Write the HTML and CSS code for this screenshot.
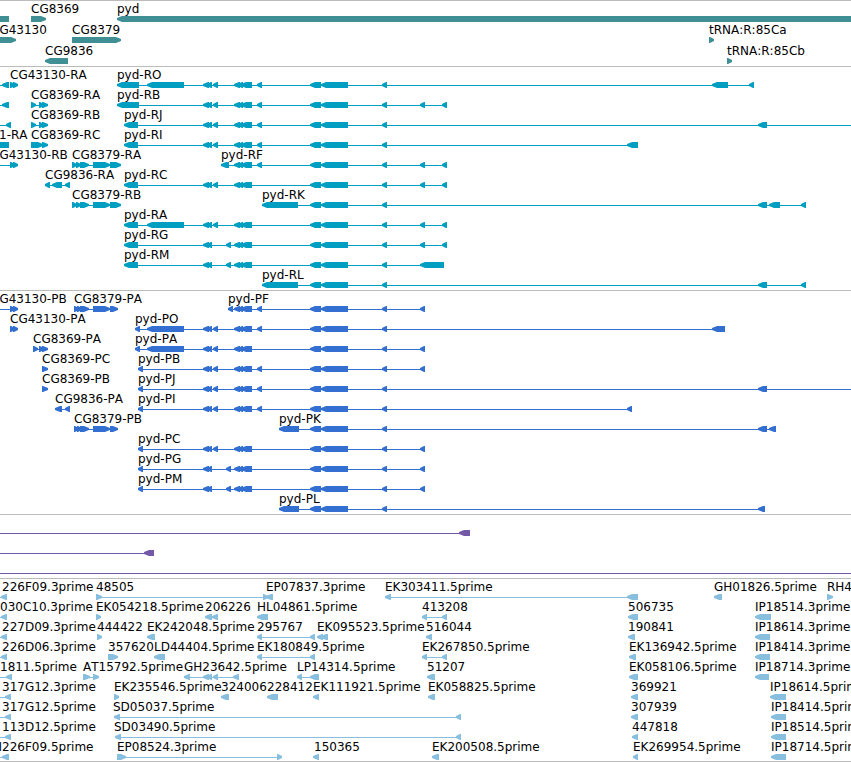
FILE: index.html
```
<!DOCTYPE html>
<html lang="en">
<head>
    <meta charset="UTF-8">
    <meta name="viewport" content="width=device-width, initial-scale=1.0">
    <title>Genome Browser - pyd region</title>
    <link rel="stylesheet" href="styles.css">
</head>
<body>
    <main class="browser">
        <section class="track gene" id="gene" aria-label="Genes"></section>
        <section class="track rna" id="rna" aria-label="Transcripts"></section>
        <section class="track protein" id="protein" aria-label="Proteins"></section>
        <section class="track aberration" id="aberration" aria-label="Aberrations"></section>
        <section class="track est" id="est" aria-label="ESTs"></section>
    </main>
    <script src="script.js"></script>
</body>
</html>
```
FILE: styles.css
```
body {
    margin: 0;
    background-color: #fff;
    font-family: "DejaVu Sans", Verdana, sans-serif;
    font-size: 12px;
    font-kerning: none;
    color: #000;
}
.browser {
    overflow: hidden;
}
.track {
    border-top: 1px solid #bbb;
    padding: 1px 0 2px;
}
.track:last-child {
    border-bottom: 1px solid #bbb;
    padding-bottom: 1px;
}
.lane {
    display: block;
    width: 100%;
    height: 20px;
    overflow: visible;
}
.lane text {
    fill: #000;
}
/* Gene lanes are a bit taller than the others */
.gene {
    fill: #408f95;
    padding-bottom: 1px;
}
.gene .lane {
    height: 21px;
}
.rna {
    fill: #009fc1;
}
.protein {
    fill: #326fd0;
}
.aberration {
    fill: #7459a9;
}
.est {
    fill: #88bede;
}
```
FILE: script.js
```
// Exon groups shared by the pyd transcripts
const A2 = '203:209 207:212';
const A = A2 + ' 213:218';
const B = '234:240 238:243 241:252';
const C = '257:262';
const D = '310:321 321:348';
const E = '382:387';
const F = '420:425';
const G = '442:447';
const OFF_LEFT = '-20:-15';
const OFF_RIGHT = '4000:4005';

// Each lane is a list of features: [label, x, strand, exons]
const tracks = {
    gene: [
        [['', 0, '-', '-20:9'], ['CG8369', 31, '+', '31:46'], ['pyd', 117, '-', '117:4000']],
        [['CG43130', -9, '+', '-9:16'], ['CG8379', 72, '+', '72:121'], ['tRNA:R:85Ca', 709, '+', '709:714']],
        [['CG9836', 45, '-', '45:68'], ['tRNA:R:85Cb', 727, '+', '727:732']]
    ],
    rna: [
        [['', 0, '-', `${OFF_LEFT} 2:9`], ['CG43130-RA', 10, '+', '10:15 13:18'],
         ['pyd-RO', 117, '-', `117:139 147:184 ${A} ${B} ${C} ${D} ${E} 712:728 749:754`]],
        [['', 0, '-', `${OFF_LEFT} 2:9`], ['CG8369-RA', 31, '+', '31:36 39:44 42:48'],
         ['pyd-RB', 117, '-', `117:139 ${A} ${B} ${C} ${D} ${E} ${F} ${G}`]],
        [['', 0, '-', `${OFF_LEFT} 6:11`], ['CG8369-RB', 31, '+', '31:36 39:44 42:48'],
         ['pyd-RJ', 124, '-', `124:138 ${A} ${B} ${C} ${D} ${E} 758:767 ${OFF_RIGHT}`]],
        [['1-RA', -1, '-', '-20:9'], ['CG8369-RC', 31, '+', '31:43 42:48'],
         ['pyd-RI', 124, '-', `124:138 ${A} ${B} ${C} ${D} ${E} 627:638`]],
        [['CG43130-RB', -9, '+', `${OFF_LEFT} 10:15 13:18`], ['CG8379-RA', 72, '+', '72:77 76:81 80:89 93:110 110:121'],
         ['pyd-RF', 221, '-', `221:229 ${B} ${C} ${D} ${E} ${F} ${G}`]],
        [['CG9836-RA', 45, '-', '45:50 52:62 65:70'],
         ['pyd-RC', 124, '-', `124:138 ${A} ${B} ${D} ${E} ${F} ${G}`]],
        [['CG8379-RB', 72, '+', '72:77 76:81 80:89 93:110 110:121'],
         ['pyd-RK', 262, '-', `262:298 ${D} ${E} 758:767 769:780 801:806`]],
        [['pyd-RA', 124, '-', `124:138 147:184 ${A} ${B} ${D} ${E} ${F} ${G}`]],
        [['pyd-RG', 124, '-', `124:138 ${A2} 226:231 ${B} ${D} ${E} ${F} ${G}`]],
        [['pyd-RM', 124, '-', `124:138 ${A2} 226:231 ${B} ${D} ${E} 420:444`]],
        [['pyd-RL', 262, '-', `262:298 ${D} ${E} 758:767 801:806`]]
    ],
    protein: [
        [['CG43130-PB', -9, '+', `${OFF_LEFT} 10:15 13:18`], ['CG8379-PA', 74, '+', '74:79 77:82 80:89 93:110 110:118'],
         ['pyd-PF', 228, '-', `228:233 ${B} ${C} ${D} ${E} ${F}`]],
        [['CG43130-PA', 10, '+', '10:15 13:18'],
         ['pyd-PO', 135, '-', `135:140 147:184 ${A} ${B} ${C} ${D} ${E} 712:725`]],
        [['CG8369-PA', 33, '+', '33:38 39:44 42:48'],
         ['pyd-PA', 135, '-', `135:140 147:184 ${A} ${B} ${D} ${E} ${F}`]],
        [['CG8369-PC', 42, '+', '42:48'], ['pyd-PB', 138, '-', `138:143 ${A} ${B} ${C} ${D} ${E} ${F}`]],
        [['CG8369-PB', 42, '+', '42:48'], ['pyd-PJ', 138, '-', `138:143 ${A} ${B} ${C} ${D} ${E} 758:767 ${OFF_RIGHT}`]],
        [['CG9836-PA', 55, '-', '55:62 65:70'], ['pyd-PI', 138, '-', `138:143 ${A} ${B} ${C} ${D} ${E} 627:632`]],
        [['CG8379-PB', 74, '+', '74:79 77:82 80:89 93:110 110:118'],
         ['pyd-PK', 279, '-', `279:299 ${D} ${E} 758:767 769:776`]],
        [['pyd-PC', 138, '-', `138:143 ${A} ${B} ${D} ${E} ${F}`]],
        [['pyd-PG', 138, '-', `138:143 ${A2} 226:231 ${B} ${D} ${E} ${F}`]],
        [['pyd-PM', 138, '-', `138:143 ${A2} 226:231 ${B} ${D} ${E} ${F}`]],
        [['pyd-PL', 279, '-', `279:299 ${D} ${E} 758:765`]]
    ],
    aberration: [
        [['', 0, '-', `${OFF_LEFT} 459:470`]],
        [['', 0, '-', `${OFF_LEFT} 144:154`]],
        [['', 0, '-', `${OFF_LEFT} ${OFF_RIGHT}`]]
    ],
    est: [
        [['226F09.3prime', 2, '-', `${OFF_LEFT} 1:7`], ['48505', 96, '+', '96:102 263:268'],
         ['EP07837.3prime', 266, '-', '266:273'], ['EK303411.5prime', 385, '-', '385:391 627:638'],
         ['GH01826.5prime', 714, '-', '714:722'], ['RH41633.5prime', 827, '+', '827:833']],
        [['030C10.3prime', 0, '-', `${OFF_LEFT} 1:7`], ['EK054218.5prime', 96, '+', '96:101'],
         ['206226', 205, '-', '205:212 212:218'], ['HL04861.5prime', 257, '-', '257:268'],
         ['413208', 422, '-', '422:427 442:447'], ['506735', 628, '-', '628:638'], ['IP18514.3prime', 755, '-', '755:771']],
        [['227D09.3prime', 2, '-', `${OFF_LEFT} 1:7`], ['444422', 97, '+', '97:102'],
         ['EK242048.5prime', 147, '-', '147:155'], ['295767', 257, '-', '257:262 310:315'],
         ['EK095523.5prime', 317, '-', '317:323 321:328'], ['516044', 426, '-', '426:432'],
         ['190841', 628, '-', '628:635'], ['IP18614.3prime', 755, '-', '755:770']],
        [['226D06.3prime', 2, '-', `${OFF_LEFT} 1:7`], ['357620', 108, '+', '108:118'],
         ['LD44404.5prime', 154, '-', '154:165'], ['EK180849.5prime', 257, '-', '257:262 310:315'],
         ['EK267850.5prime', 422, '-', '422:427 442:447'], ['EK136942.5prime', 629, '-', '629:636'],
         ['IP18414.3prime', 755, '-', '755:770']],
        [['1811.5prime', 0, '-', `${OFF_LEFT} 6:12`], ['AT15792.5prime', 83, '+', '83:90 93:99'],
         ['GH23642.5prime', 184, '-', '184:190 203:209 207:212 213:218 233:239'],
         ['LP14314.5prime', 297, '-', '297:302 310:319'], ['51207', 427, '-', '427:435'],
         ['EK058106.5prime', 629, '-', '629:638'], ['IP18714.3prime', 755, '-', '755:769']],
        [['317G12.3prime', 2, '-', `${OFF_LEFT} 5:11`], ['EK235546.5prime', 114, '+', '114:119'],
         ['324006', 221, '-', '221:229'], ['228412', 267, '-', '267:278'],
         ['EK111921.5prime', 313, '-', '313:319'], ['EK058825.5prime', 428, '-', '428:435'],
         ['369921', 631, '-', '631:638'], ['IP18614.5prime', 770, '-', '770:786']],
        [['317G12.5prime', 2, '-', `${OFF_LEFT} 5:11`], ['SD05037.5prime', 113, '-', '114:120 456:461'],
         ['307939', 631, '-', '631:638'], ['IP18414.5prime', 771, '-', '771:786']],
        [['113D12.5prime', 2, '-', `${OFF_LEFT} 5:11`], ['SD03490.5prime', 114, '-', '115:121 456:461'],
         ['447818', 632, '-', '632:638'], ['IP18514.5prime', 771, '-', '771:786']],
        [['H226F09.5prime', -7, '-', `${OFF_LEFT} 2:9`], ['EP08524.3prime', 117, '+', '117:126 277:282'],
         ['150365', 314, '-', '313:319'], ['EK200508.5prime', 432, '-', '432:439'],
         ['EK269954.5prime', 633, '-', '633:638'], ['IP18714.5prime', 771, '-', '771:786']]
    ]
};

// Box with a blunt pointed end on the side the strand runs to
function exonPoints(start, end, strand) {
    const head = Math.min(5, end - start - 1);
    const dir = strand === '+' ? -1 : 1;
    const tip = strand === '+' ? end : start;
    const back = strand === '+' ? start : end;
    const neck = tip + dir * head;
    return `${tip},16 ${tip},18 ${neck},20 ${back},20 ${back},14 ${neck},14`;
}

function drawFeature([label, x, strand, exonList]) {
    const exons = exonList.split(' ').map(exon => exon.split(':').map(Number));
    const from = exons[0][0];
    const to = exons[exons.length - 1][1];
    let svg = `<rect x="${from}" y="17" width="${to - from}" height="1"/>`;
    for (const [start, end] of exons) {
        svg += `<polygon points="${exonPoints(start, end, strand)}"/>`;
    }
    if (label) {
        svg += `<text x="${x}" y="11">${label}</text>`;
    }
    return svg;
}

for (const [id, lanes] of Object.entries(tracks)) {
    document.getElementById(id).innerHTML = lanes
        .map(lane => `<svg class="lane">${lane.map(drawFeature).join('')}</svg>`)
        .join('');
}
```
